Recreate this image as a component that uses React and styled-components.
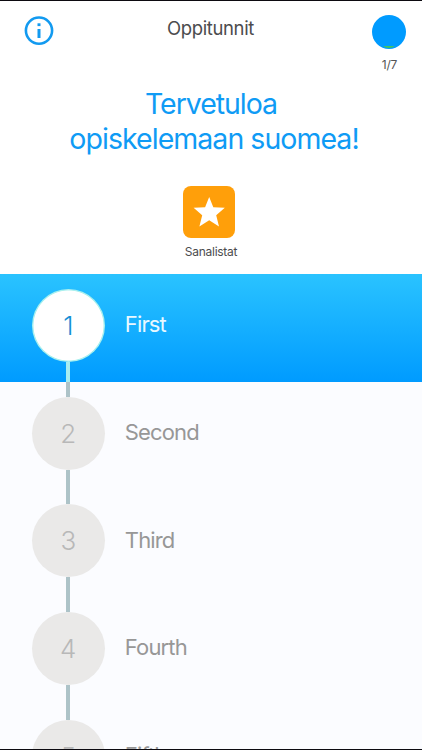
import React from "react";
import styled, { createGlobalStyle, css } from "styled-components";

const GlobalStyle = createGlobalStyle`
  *, *::before, *::after { box-sizing: border-box; }
  html, body { margin: 0; padding: 0; background: #fff; }
  body { font-family: Inter, "Liberation Sans", sans-serif; overflow: hidden; }
`;

const Screen = styled.main`
  width: 422px;
  height: 750px;
  display: flex;
  flex-direction: column;
  overflow: hidden;
  background: #fff;
  border-top: 1px solid #0c0a10;
  border-bottom: 1px solid #0c0a10;
`;

const TopBar = styled.header`
  height: 75px;
  flex: none;
  display: grid;
  grid-template-columns: 72px 1fr 72px;
  align-items: start;
  padding: 0 0 0 3px;
`;

const InfoButton = styled.button`
  width: 30px;
  height: 30px;
  margin: 14px 0 0 21px;
  padding: 0;
  border: 0;
  background: none;
  svg { display: block; }
`;

const Title = styled.h1`
  margin: 15px 0 0;
  padding-right: 4px;
  text-align: center;
  font-size: 18.5px;
  font-weight: 400;
  line-height: 24px;
  letter-spacing: -0.38px;
  color: #4c4c4e;
`;

const Progress = styled.div`
  display: flex;
  flex-direction: column;
  align-items: center;
  padding: 14px 0 0 6px;
  svg { display: block; }
`;

const ProgressLabel = styled.span`
  margin-top: 8px;
  padding-left: 1px;
  font-size: 12px;
  line-height: 16px;
  letter-spacing: -0.2px;
  color: #555;
`;

const Welcome = styled.h2`
  flex: none;
  margin: 10px 0 0;
  padding-left: 6px;
  text-align: center;
  font-size: 28.5px;
  font-weight: 400;
  line-height: 35px;
  letter-spacing: -0.96px;
  color: #0f9bf5;
  span { display: block; }
  span:first-child { padding-right: 6px; letter-spacing: -1.05px; }
`;

const WordLists = styled.button`
  flex: none;
  height: 118.4px;
  padding: 29.6px 0 0;
  border: 0;
  background: none;
  font-family: inherit;
  display: flex;
  flex-direction: column;
  align-items: center;
`;

const WordListsIcon = styled.span`
  width: 52px;
  height: 52px;
  margin-right: 4px;
  border-radius: 8px;
  background: #ff9f0a;
  svg { display: block; }
`;

const WordListsLabel = styled.span`
  margin-top: 6.4px;
  font-size: 12px;
  line-height: 16px;
  letter-spacing: -0.28px;
  color: #4c4c4e;
`;

const Lessons = styled.ol`
  flex: 1;
  min-height: 0;
  margin: 0;
  padding: 0;
  list-style: none;
  overflow: hidden;
  background: #fbfcff;
`;

const Lesson = styled.li`
  height: 107.7px;
  display: grid;
  grid-template-columns: 73px 1fr;
  column-gap: 20px;
  padding-left: 31.8px;
  ${({ $active }) => $active && css`
    background: linear-gradient(#2ac3ff, #009bff);
  `}
`;

const Track = styled.div`
  display: flex;
  flex-direction: column;
  align-items: center;
`;

const Line = styled.span`
  width: 4px;
  flex: ${({ $lead }) => ($lead ? "0 0 14.7px" : "1")};
  background: ${({ $active, $hidden }) =>
    $hidden ? "transparent" : $active ? "#a8edf0" : "#adc3c8"};
`;

const Bubble = styled.span`
  width: 73px;
  height: 73px;
  flex: none;
  display: flex;
  align-items: center;
  justify-content: center;
  border-radius: 50%;
  font-size: 26px;
  font-weight: 300;
  color: #b8b8b8;
  background: #eae9e8;
  ${({ $active }) => $active && css`
    color: #168fd5;
    background: #aaf0ee;
    background: radial-gradient(circle closest-side, #fff 34.6px, #aaf0ee 35.4px);
  `}
`;

const LessonName = styled.span`
  margin-top: 36px;
  height: 28px;
  font-size: 22px;
  font-weight: 400;
  line-height: 28px;
  letter-spacing: -0.85px;
  color: ${({ $active }) => ($active ? "#e9f8ff" : "#979797")};
`;

const lessons = ["First", "Second", "Third", "Fourth", "Fifth"];

export default function App() {
  return (
    <>
      <GlobalStyle />
      <Screen>
        <TopBar>
          <InfoButton aria-label="Info">
            <svg width="30" height="30" viewBox="0 0 30 30">
              <circle cx="15" cy="15.6" r="13.1" fill="none" stroke="#129af0" strokeWidth="2.6" />
              <rect x="13.5" y="8.3" width="3" height="2.8" fill="#129af0" />
              <rect x="13.5" y="14" width="3" height="9" fill="#129af0" />
            </svg>
          </InfoButton>
          <Title>Oppitunnit</Title>
          <Progress>
            <svg width="34" height="34" viewBox="0 0 34 34">
              <circle cx="17" cy="17" r="17" fill="#009bff" />
              <path d="M11 31H23Q17 35 11 31Z" fill="#3fc45f" />
            </svg>
            <ProgressLabel>1/7</ProgressLabel>
          </Progress>
        </TopBar>
        <Welcome>
          <span>Tervetuloa</span>
          <span>opiskelemaan suomea!</span>
        </Welcome>
        <WordLists>
          <WordListsIcon>
            <svg width="52" height="52" viewBox="0 0 52 52">
              <path d="M26.2 11L30.3 21.2L41.8 21.8L33.2 29.3L36 40.5L26.2 34.3L16.4 40.5L19.2 29.3L10.6 21.8L22.1 21.2Z" fill="#fff" />
            </svg>
          </WordListsIcon>
          <WordListsLabel>Sanalistat</WordListsLabel>
        </WordLists>
        <Lessons>
          {lessons.map((name, i) => {
            const active = i === 0;
            return (
              <Lesson key={name} $active={active}>
                <Track>
                  <Line $lead $hidden={active} />
                  <Bubble $active={active}>{i + 1}</Bubble>
                  <Line $active={active} />
                </Track>
                <LessonName $active={active}>{name}</LessonName>
              </Lesson>
            );
          })}
        </Lessons>
      </Screen>
    </>
  );
}
